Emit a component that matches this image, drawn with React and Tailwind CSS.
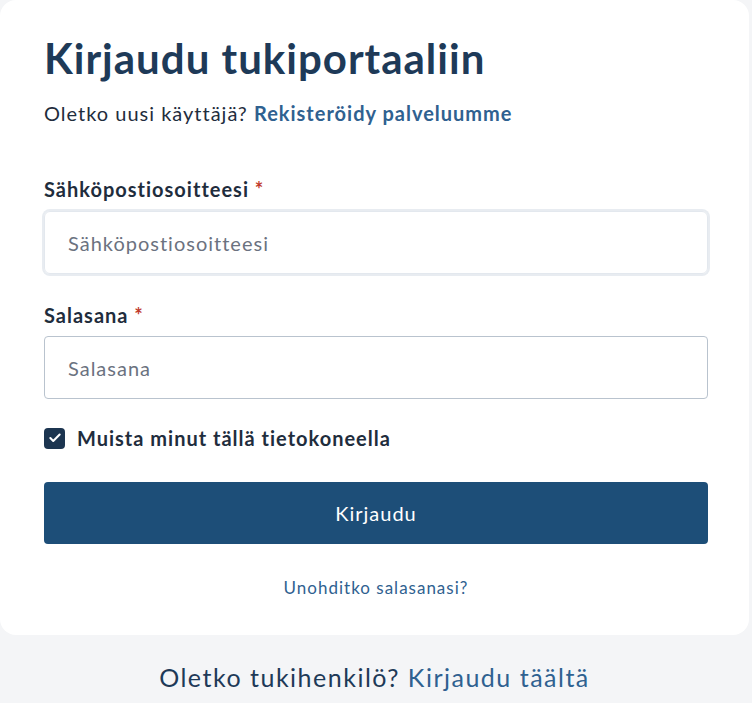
import { Check } from 'lucide-react';

export default function App() {
  return (
    <div className="min-h-screen bg-white font-['Lato','Liberation_Sans',sans-serif] tracking-[1px]">
      <div className="bg-[#f4f5f7] pr-[3px]">
        {/* Login card */}
        <div className="bg-white rounded-2xl pl-[44px] pr-[41px] pt-[33px] pb-[34px]">
          <h1 className="text-[42px] leading-[1.2] font-bold text-[#1e3a58]">
            Kirjaudu tukiportaaliin
          </h1>
          <p className="mt-[18px] text-[20px] leading-[1.2] text-[#1f2d3d]">
            Oletko uusi käyttäjä?{' '}
            <a href="#" className="font-bold text-[#2f6190]">Rekisteröidy palveluumme</a>
          </p>

          <form className="mt-[52px]">
            <label className="block text-[20px] leading-[1.2] font-bold text-[#1f2d3d]">
              Sähköpostiosoitteesi <span className="text-[#c0392b]">*</span>
            </label>
            <input
              type="email"
              placeholder="Sähköpostiosoitteesi"
              className="mt-[10px] block w-full h-[63px] rounded-md border border-[#e3e8ee] ring-2 ring-[#e8ecf1] px-[23px] text-[20px] tracking-[1px] text-[#1f2d3d] placeholder-[#6b7280] outline-none"
            />

            <label className="mt-[29px] block text-[20px] leading-[1.2] font-bold text-[#1f2d3d]">
              Salasana <span className="text-[#c0392b]">*</span>
            </label>
            <input
              type="password"
              placeholder="Salasana"
              className="mt-[9px] block w-full h-[63px] rounded border border-[#b9c3ce] px-[23px] text-[20px] tracking-[1px] text-[#1f2d3d] placeholder-[#6b7280] outline-none"
            />

            <label className="mt-[27px] flex items-center gap-[12px] text-[20px] leading-[1.2] font-bold text-[#1f2d3d]">
              <span className="w-[21px] h-[21px] rounded-[4px] bg-[#1c3550] flex items-center justify-center">
                <Check size={14} strokeWidth={3.5} className="text-white" />
              </span>
              Muista minut tällä tietokoneella
            </label>

            <button
              type="button"
              className="mt-[32px] w-full h-[62px] rounded bg-[#1d4e78] text-white text-[20px] tracking-[1px]"
            >
              Kirjaudu
            </button>
          </form>

          <div className="mt-[31px] text-center">
            <a href="#" className="text-[17px] text-[#2f6190]">Unohditko salasanasi?</a>
          </div>
        </div>

        {/* Footer */}
        <div className="h-[68px] pt-[27px] text-center">
          <p className="text-[25px] leading-[1.2] tracking-[1.5px] text-[#1e3a58]">
            Oletko tukihenkilö?{' '}
            <a href="#" className="text-[#2f6190]">Kirjaudu täältä</a>
          </p>
        </div>
      </div>
    </div>
  );
}
